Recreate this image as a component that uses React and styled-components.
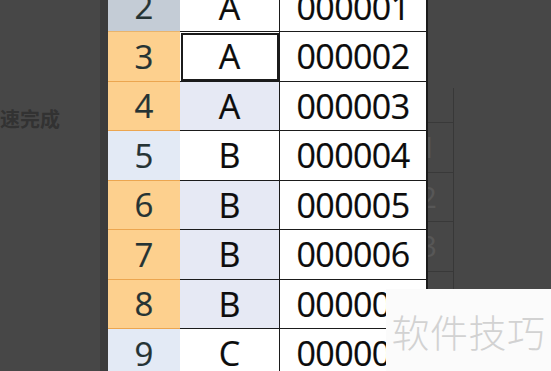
import React from "react";
import styled, { createGlobalStyle, css } from "styled-components";

const GlobalStyle = createGlobalStyle`
  html, body { margin: 0; padding: 0; background: #474747; overflow: hidden; }
  body { font-family: "Open Sans", "Noto Sans", sans-serif; }
`;

const Page = styled.div`
  position: relative;
  display: flex;
  align-items: flex-start;
  width: 551px;
  height: 371px;
  overflow: hidden;
  background: #474747;
`;

const LeftPane = styled.div`
  flex: none;
  width: 100px;
  padding-top: 108px;
  box-sizing: border-box;
`;

const Caption = styled.div`
  font-family: "Noto Sans CJK SC", "Noto Sans", sans-serif;
  font-weight: 700;
  font-size: 20px;
  line-height: 22px;
  color: #323232;
  white-space: nowrap;
`;

const Strip = styled.div`
  flex: none;
  width: 8px;
  height: 371px;
  background: #3c3c3c;
`;

const Sheet = styled.div`
  flex: none;
  display: grid;
  grid-template-columns: 72px 100px 148px;
  grid-auto-rows: 49.5px;
  margin-top: -17.5px;
  position: relative;
  z-index: 1;
`;

const headFills = {
  gray: "#c4ccd6",
  orange: "#fdd08e",
  blue: "#e3eaf5",
};

const HeadCell = styled.div`
  display: flex;
  align-items: center;
  justify-content: center;
  box-sizing: border-box;
  background: ${(p) => headFills[p.$tone]};
  border-bottom: 1.5px solid ${(p) => (p.$tone === "gray" ? "#e9b46c" : "#eca650")};
  font-size: 33px;
  line-height: 1;
  color: #253334;
  -webkit-text-stroke: 0.2px #253334;
`;

const DataCell = styled.div`
  display: flex;
  align-items: center;
  justify-content: center;
  box-sizing: border-box;
  background: ${(p) => (p.$shade ? "#e6e9f4" : "#ffffff")};
  border-bottom: 1.5px solid #1b1b1b;
  border-right: ${(p) => (p.$last ? "2px" : "1.5px")} solid #1b1b1b;
  font-size: 34px;
  line-height: 1;
  color: #0c0c0c;
  -webkit-text-stroke: 0.2px #0c0c0c;
  letter-spacing: ${(p) => (p.$last ? "-0.6px" : "0")};
  ${(p) =>
    p.$active &&
    css`
      outline: 2px solid #1b1b1b;
      outline-offset: -3px;
    `}
`;

const Ghost = styled.div`
  flex: none;
  width: 25px;
  margin-top: 88px;
  display: flex;
  flex-direction: column;
  border-right: 1.5px solid #383838;
`;

const GhostTop = styled.div`
  height: 34px;
`;

const GhostCell = styled.div`
  height: 49.5px;
  box-sizing: border-box;
  border-top: 1.5px solid #393939;
  display: flex;
  align-items: center;
  justify-content: flex-end;
  padding-right: 16px;
  overflow: hidden;
  font-size: 30px;
  line-height: 1;
  color: #575757;
`;

const Watermark = styled.div`
  position: absolute;
  left: 386px;
  top: 289px;
  width: 165px;
  height: 82px;
  z-index: 2;
  background: #fbfbfb;
  display: flex;
  align-items: center;
  justify-content: center;
  font-family: "Noto Sans CJK SC", sans-serif;
  font-weight: 300;
  font-size: 38px;
  letter-spacing: 0.5px;
  color: #d2d2d2;
`;

const rows = [
  { n: 2, b: "A", c: "000001", tone: "gray", shade: false },
  { n: 3, b: "A", c: "000002", tone: "orange", shade: false, active: true },
  { n: 4, b: "A", c: "000003", tone: "orange", shade: true },
  { n: 5, b: "B", c: "000004", tone: "blue", shade: false },
  { n: 6, b: "B", c: "000005", tone: "orange", shade: true },
  { n: 7, b: "B", c: "000006", tone: "orange", shade: true },
  { n: 8, b: "B", c: "000007", tone: "orange", shade: true },
  { n: 9, b: "C", c: "000008", tone: "blue", shade: false },
];

const ghostRows = ["1", "2", "3", ""];

export default function App() {
  return (
    <>
      <GlobalStyle />
      <Page>
        <LeftPane>
          <Caption>速完成</Caption>
        </LeftPane>
        <Strip />
        <Sheet>
          {rows.map((r) => (
            <React.Fragment key={r.n}>
              <HeadCell $tone={r.tone}>{r.n}</HeadCell>
              <DataCell $shade={r.shade} $active={r.active}>
                {r.b}
              </DataCell>
              <DataCell $last>{r.c}</DataCell>
            </React.Fragment>
          ))}
        </Sheet>
        <Ghost>
          <GhostTop />
          {ghostRows.map((g, i) => (
            <GhostCell key={i}>{g}</GhostCell>
          ))}
        </Ghost>
        <Watermark>软件技巧</Watermark>
      </Page>
    </>
  );
}
